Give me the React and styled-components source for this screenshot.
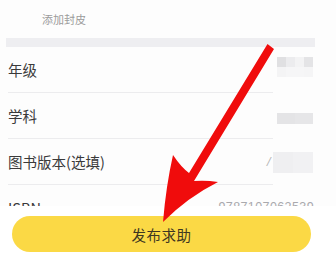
import styled, { createGlobalStyle } from "styled-components";

const GlobalStyle = createGlobalStyle`
	*, *::before, *::after {
		box-sizing: border-box;
	}

	html, body {
		margin: 0;
		padding: 0;
		background: #ffffff;
	}

	body {
		font-family: "Noto Sans CJK SC", "Noto Sans", sans-serif;
	}
`;

const Screen = styled.div`
	background: #fdfdfd;
	height: 271px;
	overflow: hidden;
	position: relative;
	width: 336px;
`;

const CoverRow = styled.div`
	align-items: center;
	color: #9b9b9b;
	display: flex;
	font-size: 11px;
	height: 38px;
	padding-left: 42px;
`;

const Band = styled.div`
	background: #eeeef1;
	height: 9px;
	margin: 0 21px 0 6px;
`;

const FormRow = styled.div`
	display: flex;
	height: 46px;
	padding-left: 8px;
`;

const Label = styled.div`
	align-items: center;
	border-bottom: 1px solid #ececee;
	color: #3a3a3a;
	display: flex;
	flex: 1;
	font-size: 14.5px;
`;

const ValueCell = styled.div`
	align-items: center;
	display: flex;
	justify-content: flex-end;
	padding-right: 23px;
	position: relative;
	width: 63px;
`;

const Mosaic = styled.div`
	display: grid;
	grid-template-columns: repeat(${(props) => props.$cols}, 1fr);
	height: ${(props) => props.$height}px;
	margin-top: ${(props) => props.$offset || 0}px;
	width: ${(props) => props.$width}px;
`;

const Tile = styled.div`
	background: ${(props) => props.$color};
`;

const Hint = styled.span`
	color: #b5b5b5;
	font-family: "DejaVu Sans", sans-serif;
	font-size: 11px;
	font-style: italic;
	left: -6px;
	position: absolute;
	top: 16px;
`;

const IsbnValue = styled.span`
	color: #a9a9ad;
	font-family: "Liberation Sans", sans-serif;
	font-size: 12.5px;
	letter-spacing: 0.4px;
	position: absolute;
	right: 22px;
	top: 15px;
	white-space: nowrap;
`;

const BottomBar = styled.div`
	background: #ffffff;
	bottom: 0;
	height: 65px;
	left: 0;
	padding: 10px 25px 0 12px;
	position: absolute;
	right: 0;
`;

const SubmitButton = styled.button`
	align-items: center;
	background: #fbd945;
	border: none;
	border-radius: 18px;
	color: #3e3721;
	display: flex;
	font-family: "Noto Sans CJK SC", sans-serif;
	font-size: 14.5px;
	height: 36px;
	justify-content: center;
	letter-spacing: 0.5px;
	padding: 0;
	width: 100%;
`;

const ArrowLayer = styled.svg`
	left: 0;
	pointer-events: none;
	position: absolute;
	top: 0;
`;

const rows = [
	{
		label: "年级",
		mosaic: { cols: 4, height: 20, width: 36, offset: -7, tiles: ["#e0e0e2", "#ececee", "#f3f3f4", "#e4e4e6", "#f4f4f5", "#f6f6f7", "#f6f6f7", "#f5f5f6"] },
	},
	{
		label: "学科",
		mosaic: { cols: 2, height: 11, width: 36, offset: 4, tiles: ["#e4e4e6", "#e6e6e8"] },
	},
	{
		label: "图书版本(选填)",
		hint: "/",
		mosaic: { cols: 2, height: 21, width: 40, offset: 0, tiles: ["#efeff1", "#f1f1f3"] },
	},
];

const Arrow = () => (
	<ArrowLayer width="336" height="271" viewBox="0 0 336 271">
		<path
			fill="#f00c0c"
			d="M163 222 Q166 186 173 155 Q181 167 189 173 L267.5 44 L274 49 L194 181 Q206 180 218 182 Q188 197 163 222 Z"
		/>
	</ArrowLayer>
);

const App = () => (
	<>
		<GlobalStyle />
		<Screen>
			<CoverRow>添加封皮</CoverRow>
			<Band />
			{rows.map((row) => (
				<FormRow key={row.label}>
					<Label>{row.label}</Label>
					<ValueCell>
						{row.hint && <Hint>{row.hint}</Hint>}
						<Mosaic
							$cols={row.mosaic.cols}
							$height={row.mosaic.height}
							$width={row.mosaic.width}
							$offset={row.mosaic.offset}
						>
							{row.mosaic.tiles.map((color, i) => (
								<Tile key={i} $color={color} />
							))}
						</Mosaic>
					</ValueCell>
				</FormRow>
			))}
			<FormRow>
				<Label>ISBN</Label>
				<ValueCell>
					<IsbnValue>9787107062539</IsbnValue>
				</ValueCell>
			</FormRow>
			<BottomBar>
				<SubmitButton>发布求助</SubmitButton>
			</BottomBar>
			<Arrow />
		</Screen>
	</>
);

export default App;
